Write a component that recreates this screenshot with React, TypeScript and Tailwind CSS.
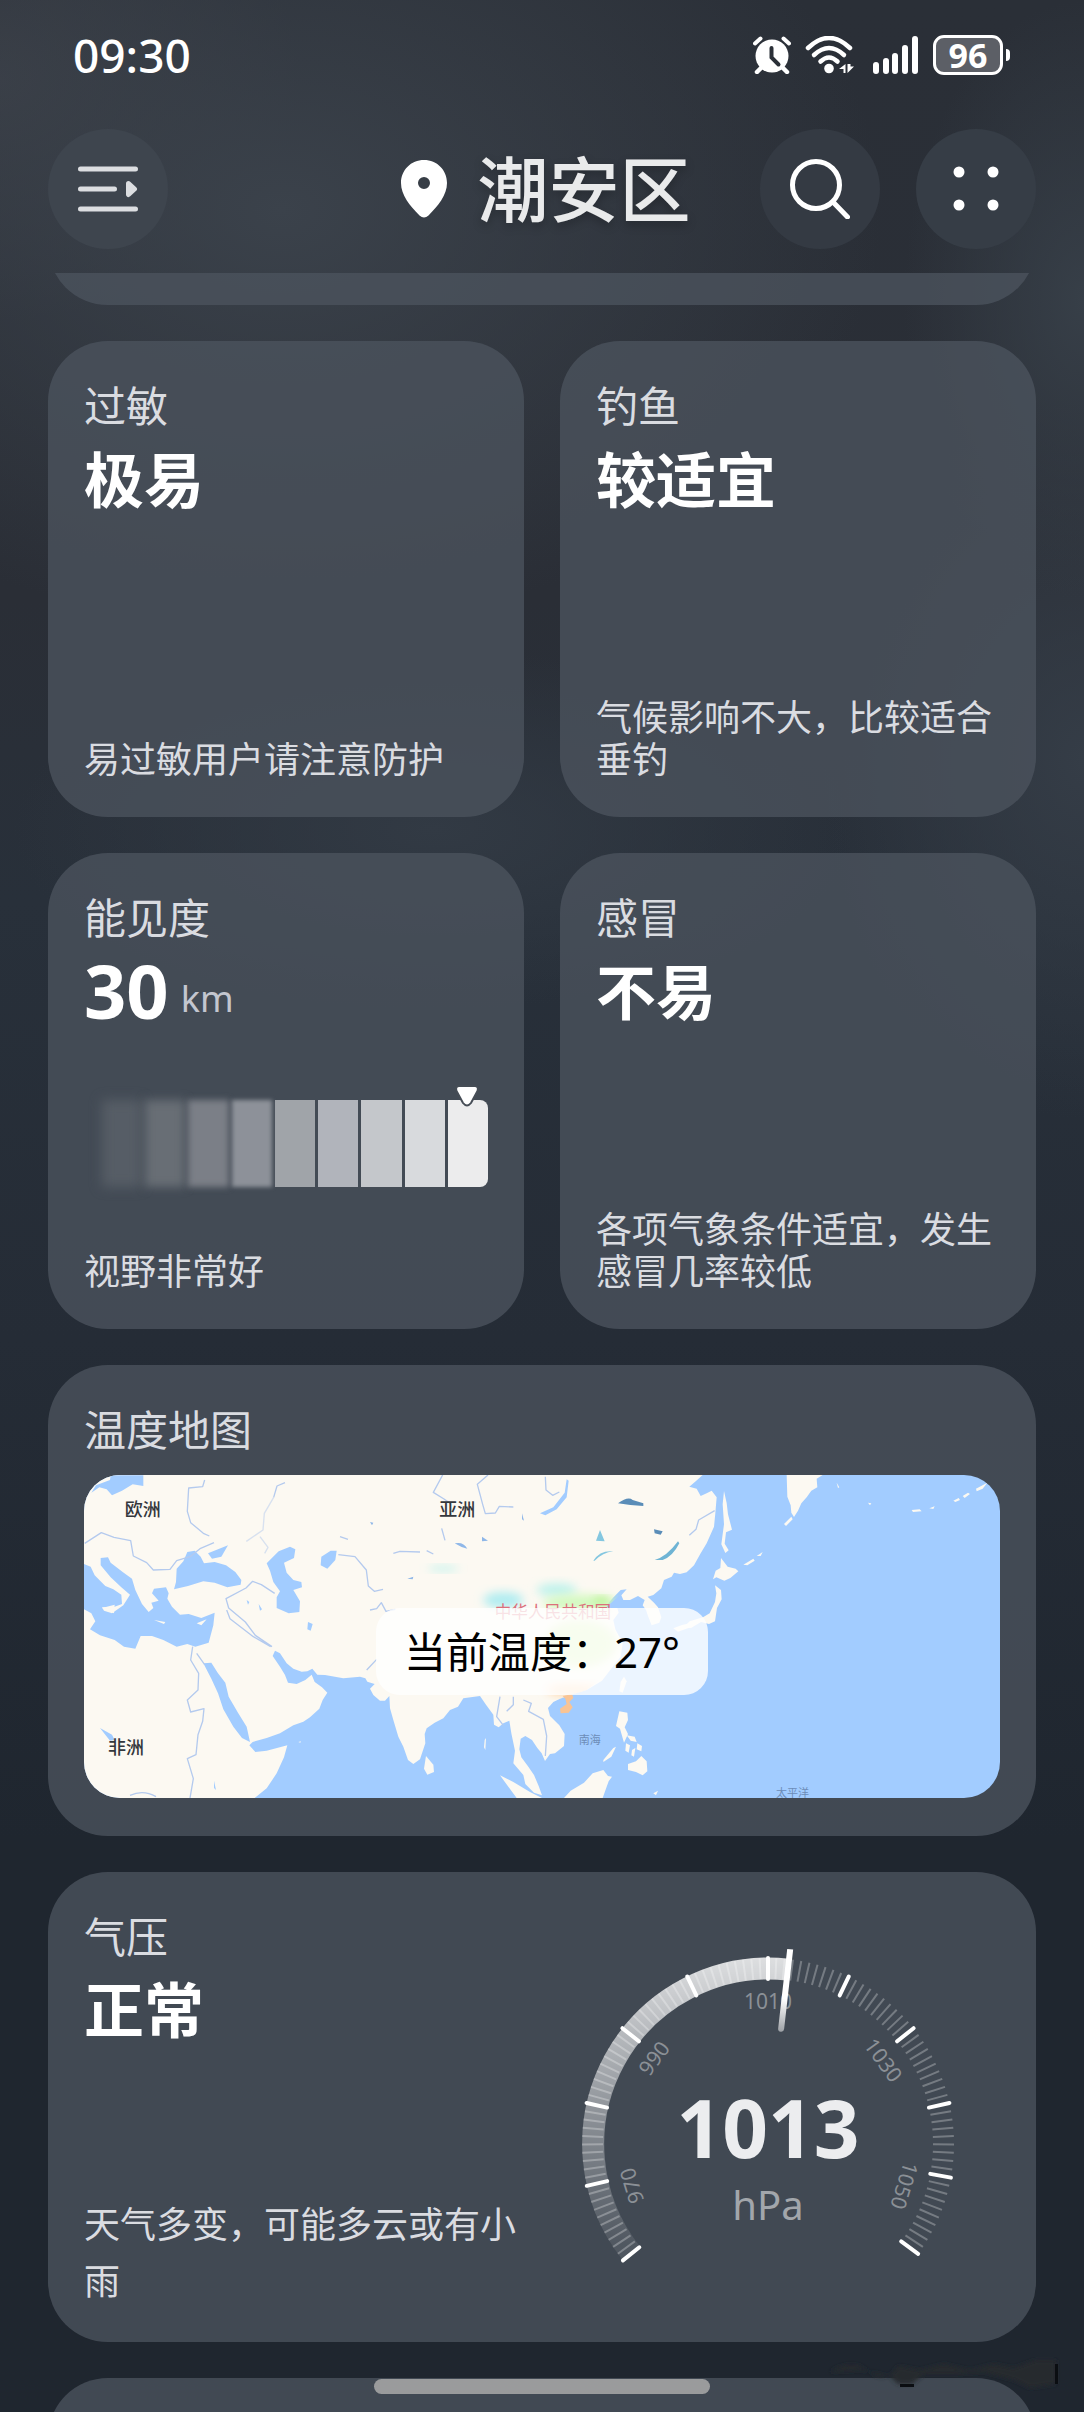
import React from 'react';

interface IndexCardProps {
  title: string;
  value: React.ReactNode;
  description: string;
  children?: React.ReactNode;
}

const VISIBILITY_LEVELS = [
  'bg-[#565d66] blur-[6px]',
  'bg-[#686e75] blur-[5px]',
  'bg-[#7b7f87] blur-[3px]',
  'bg-[#8d9199] blur-[2px]',
  'bg-[#a0a4a9]',
  'bg-[#b1b4bb]',
  'bg-[#c4c7cb]',
  'bg-[#d8dadd]',
  'bg-[#ececed] rounded-r-lg',
];

const TICK_STEP = 2.575;
const LEFT_TICKS = Array.from({ length: 51 }, (_, i) => i - 50);
const RIGHT_TICKS = Array.from({ length: 49 }, (_, i) => i + 1);
const MAJOR_TICKS = [-50, -40, -30, -20, -10, 0, 10, 20, 30, 39, 49];

const GAUGE_LABELS = [
  { text: '970', angle: -107 },
  { text: '990', angle: -53 },
  { text: '1010', angle: 0 },
  { text: '1030', angle: 54 },
  { text: '1050', angle: 107 },
];

const StatusBar = () => (
  <div className="flex h-[110px] items-center justify-between pr-[74px] pl-[73px] text-white">
    <span className="text-[46px] leading-[56px] font-medium">09:30</span>
    <div className="flex items-center gap-[14px]">
      {/* alarm */}
      <svg className="h-[38px] w-[38px]" viewBox="0 0 38 38" fill="none" stroke="currentColor" strokeLinecap="round">
        <circle cx="19" cy="20" r="16.500" fill="currentColor" stroke="none" />
        <path d="M2 7.500L7.500 2.500M36 7.500L30.500 2.500" strokeWidth="4" />
        <path d="M8 32l-4 4M30 32l4 4" strokeWidth="4.500" />
        <path d="M18.500 12v9.500l7 7" stroke="#2b3038" strokeWidth="4" />
      </svg>
      {/* wifi */}
      <svg className="h-[38px] w-[50px]" viewBox="0 0 50 38" fill="none" stroke="currentColor" strokeLinecap="round">
        <path d="M3 12Q24 -8 45 12" strokeWidth="4.500" />
        <path d="M9 19Q24 5 39 19" strokeWidth="4.500" />
        <path d="M15.500 25.500Q24 17.500 32.500 25.500" strokeWidth="4.500" />
        <circle cx="24" cy="32.500" r="4.800" fill="currentColor" stroke="none" />
        <path d="M40.500 28v9h-2v-4h-4.500zM42.500 28v9l6.500-6.500h-3.500V28z" fill="currentColor" stroke="none" />
      </svg>
      {/* signal */}
      <svg className="h-[38px] w-[50px]" viewBox="0 0 50 38" fill="currentColor">
        <rect x="4" y="26" width="6" height="12" rx="3" />
        <rect x="14" y="22" width="6" height="16" rx="3" />
        <rect x="23" y="17" width="6" height="21" rx="3" />
        <rect x="33" y="9" width="6" height="29" rx="3" />
        <rect x="43" y="0" width="6" height="38" rx="3" />
      </svg>
      <div className="flex items-center gap-[3px]">
        <div className="flex h-10 w-[70px] items-center justify-center rounded-[11px] border-3 border-white bg-[#5c5f66] text-[34px] leading-[34px] font-bold">
          96
        </div>
        <div className="h-3 w-1 rounded-r-sm bg-white" />
      </div>
    </div>
  </div>
);

const Header = () => (
  <header className="grid grid-cols-[1fr_auto_1fr] items-center px-12 pt-[19px] pb-6">
    <button
      aria-label="城市列表"
      className="flex h-[120px] w-[120px] items-center justify-center rounded-full bg-[#3e454e] text-[#dcdee1]"
    >
      <svg className="h-[60px] w-[60px]" viewBox="0 0 60 60" fill="none" stroke="currentColor" strokeWidth="5" strokeLinecap="round">
        <path d="M2.500 10h55M2.500 30h34M2.500 50h55" />
        <path d="M50.500 24.500l6 5.500-6 5.500z" fill="currentColor" strokeWidth="5" strokeLinejoin="round" />
      </svg>
    </button>
    <div className="flex items-center gap-[30px] pl-2">
      <svg className="h-[58px] w-[46px]" viewBox="0 0 46 58" fill="white" fillRule="evenodd">
        <path d="M23 0C10 0 0 10 0 23c0 12 9 23 18.500 32.500q4.500 4 9 0C37 46 46 35 46 23 46 10 36 0 23 0zm0 17a6 6 0 1 1 0 12 6 6 0 0 1 0-12z" />
      </svg>
      <h1 className="text-[71px] leading-[84px] font-medium text-[#e9eaeb] text-shadow-[0_4px_10px_rgb(0_0_0/0.25)]">
        潮安区
      </h1>
    </div>
    <div className="flex justify-end gap-9">
      <button
        aria-label="搜索"
        className="flex h-[120px] w-[120px] items-center justify-center rounded-full bg-[#343a43] text-white"
      >
        <svg className="h-[60px] w-[60px]" viewBox="0 0 60 60" fill="none" stroke="currentColor" strokeWidth="5" strokeLinecap="round">
          <circle cx="26" cy="26" r="23.500" />
          <path d="M43 43l14.500 15" />
        </svg>
      </button>
      <button
        aria-label="更多"
        className="flex h-[120px] w-[120px] items-center justify-center rounded-full bg-[#363d46] text-white"
      >
        <svg className="h-[46px] w-[46px]" viewBox="0 0 46 46" fill="currentColor">
          <circle cx="6" cy="6" r="5.500" />
          <circle cx="40" cy="6" r="5.500" />
          <circle cx="6" cy="39" r="5.500" />
          <circle cx="40" cy="39" r="5.500" />
        </svg>
      </button>
    </div>
  </header>
);

const CardTitle = ({ children }: { children: React.ReactNode }) => (
  <h2 className="text-[42px] leading-[58px] text-[#dadce1]">{children}</h2>
);

const IndexCard: React.FC<IndexCardProps> = ({ title, value, description, children }) => (
  <section className="flex min-h-[476px] flex-col rounded-[60px] bg-[#4c535d]/78 p-9">
    <CardTitle>{title}</CardTitle>
    <div className="mt-2 text-[60px] leading-[74px] font-bold text-white">{value}</div>
    {children}
    <p className="mt-auto text-[36px] leading-[42px] text-[#dadce1]">{description}</p>
  </section>
);

const VisibilityBar = () => (
  <div className="relative mt-[65px] flex h-[87px] gap-[3px] pl-[18px]">
    {VISIBILITY_LEVELS.map((level) => (
      <div key={level} className={`flex-1 ${level}`} />
    ))}
    <svg className="absolute -top-[15px] right-2 h-6 w-[26px]" viewBox="0 0 26 24">
      <path
        d="M5 1h16q4 .5 2.500 5L17 18q-4 5-8 0L2.500 6Q1 1.500 5 1z"
        fill="white"
        stroke="#464d56"
        strokeWidth="2"
      />
    </svg>
  </div>
);

const TemperatureMap = () => (
  <div className="relative mt-4 flex h-[323px] items-center justify-center overflow-hidden rounded-[36px] bg-[#a2ccff] pt-[30px]">
    <svg
      className="absolute inset-0 h-full w-full"
      viewBox="12 285 2748 969"
      preserveAspectRatio="xMidYMid slice"
    >
      <defs>
        <filter id="haze" x="-50%" y="-50%" width="200%" height="200%">
          <feGaussianBlur stdDeviation="14" />
        </filter>
        <clipPath id="mainland">
          <path d="M1000 285H1865L1900 440 1820 575 1720 645 1640 628 1580 680 1610 700 1600 740 1630 800 1600 850 1560 900 1520 930 1430 960 1000 960z" />
        </clipPath>
      </defs>
      {/* continents */}
      <g fill="#fcf9f2">
        <path d="M12 285H1868L1848 303 1828 320 1850 326 1862 348 1880 340 1895 332 1910 352 1906 400 1902 440 1880 490 1862 520 1842 556 1820 577 1800 582 1782 578 1775 590 1752 600 1744 625 1720 645 1703 650 1722 668 1734 682 1744 712 1738 728 1715 736 1704 708 1698 690 1688 676 1694 660 1674 648 1650 660 1630 660 1624 646 1640 628 1622 630 1602 650 1586 668 1578 684 1612 684 1616 698 1600 720 1606 748 1628 790 1622 830 1600 858 1566 902 1520 930 1470 945 1440 956 1420 966 1404 984 1410 1008 1438 1036 1454 1062 1452 1098 1425 1120 1410 1122 1395 1143 1385 1120 1372 1104 1356 1080 1336 1068 1322 1076 1318 1108 1324 1132 1345 1160 1362 1185 1376 1218 1386 1246 1362 1238 1336 1212 1330 1185 1300 1150 1305 1112 1294 1060 1288 1022 1270 1030 1256 1042 1242 1034 1240 1004 1218 974 1200 948 1150 955 1134 980 1110 990 1090 1015 1064 1028 1040 1045 1034 1062 1036 1090 1020 1138 1000 1152 984 1140 970 1100 955 1070 940 1020 930 985 928 948 915 962 900 962 880 945 870 926 884 912 862 905 856 895 840 890 790 895 735 885 712 884 697 866 682 874 665 875 640 866 620 850 600 820 585 812 578 828 600 860 615 885 624 908 650 912 676 900 695 884 704 906 726 922 742 938 728 960 718 986 690 1012 670 1025 640 1036 600 1060 560 1074 518 1086 508 1096 526 1116 560 1112 622 1096 612 1132 590 1180 560 1225 524 1254H12z" />
        {/* kamchatka and kurils */}
        <path d="M2120 285H2228L2210 296 2212 322 2194 332 2180 352 2164 370 2154 392 2142 411 2134 398 2132 376 2122 350z" />
        <path d="M2112 432l22-22 4 8-20 20zM1990 554l30-18 4 6-22 14zM2030 528l18-12-6 12zM2270 308l8 14-4 2zM2364 368l10 2-4 6zM2495 390l24-2 6 6-26 2zM2548 385l16-6-4 8zM2620 362l16-8 4 6-14 6zM2648 348l16-10 6 4-16 12zM2688 326l34-18-14 18-18 8z" />
        {/* sakhalin and japan */}
        <path d="M1932 333l8 36 4 34 12 46-18 8-4 34 12 20-10 8-12-26 8-60-4-60z" />
        <path d="M1923 534l20 26 24 6 8 8-24 20-18 8-24-10-10 6 8-26 14-8z" />
        <path d="M1905 616l18 14 2 28-14 26-6 40-18 8-24-6-30 18-20-4 16-16 40-12 20-12 16-34 4-26z" />
        <path d="M1780 745l26-10 38-8-10 14-40 14z" />
        {/* taiwan, philippines, borneo, sumatra, sri lanka */}
        <path d="M1632 890l8 14-12 34-10-4 4-28z" />
        <path d="M1618 994l24 4 2 22-10 22 10 20-12 26-12-42-12-8z" />
        <path d="M1640 1066l24 4 6 16-18-4zM1672 1090l14 8-2 16-14-6zM1638 1090l12 6-4 22-10-6zM1656 1110l10-6-4 26-8-4zM1644 1152l24-8 16-16 16 16 2 30-14 12-20-10-24-6zM1570 1140l30-36 8-4-14 30-24 16z" />
        <path d="M1570 1170l14 18 12 2-10 14-6 16-12 34H1452l20-22 40-24 26-28z" />
        <path d="M1260 1186l40 20 50 30 36 18H1310z" />
        <path d="M1038 1128l22 26 2 22-20 8-10-18z" />
        <path d="M1720 1240l14-8-6 14zM655 1086l8-2-2 4zM1214 1080l4-6-2 36-4-8z" />
      </g>
      {/* seas and lakes */}
      <g fill="#a2ccff">
        <path d="M34 338L48 316 90 300 92 286H190V318L158 313 126 332 96 346 80 328 58 322z" />
        <path d="M12 552L32 560 44 586 76 618 100 628 124 644 126 672 104 680 66 682 72 692 96 700 130 676 150 644 124 622 92 592 62 556 62 534 84 532 92 548 128 576 156 596 166 630 186 672 206 696 220 684 214 668 236 662 216 640 222 626 258 622 266 640 262 656 276 680 300 704 326 702 364 714 404 698 400 736 386 788 346 800 322 792 290 800 250 780 216 768 182 768 166 806 132 800 104 780 60 766 30 748 46 724 34 700 12 688z" />
        <path d="M288 606L290 566 310 544 322 516 344 512 362 530 372 550 404 546 438 556 466 576 484 600 482 614 442 622 404 608 370 604 324 618 282 628z" />
        <path d="M384 520L444 496 424 530 396 536z" />
        <path d="M560 550L596 514 630 500 646 508 642 534 612 548 620 578 640 600 664 606 666 622 640 630 660 664 658 696 626 700 590 684 590 652 600 634 580 606 570 572z" />
        <path d="M724 530L752 512 770 512 766 540 742 566 722 556z" />
        <path d="M370 850L394 848 414 880 436 908 446 950 474 998 500 1040 510 1086 486 1074 460 1040 430 988 414 940 394 896z" />
        <path d="M684 726l14 6-6 20-10-4zM500 660l8 6-4 8zM536 672l10 16-6 4zM60 1044l36 20 8 16-14 2zM402 1202l6 28-6-6z" />
        <path d="M1380 400l40-18 34-44 6-40 6 4-6 50-30 36-34 18z" />
      </g>
      <path d="M66 684l38-10-2 26zM222 720l34 6-4 6zM350 730l30-12-16 18z" fill="#fcf9f2" />
      {/* rivers */}
      <g fill="none" stroke="#b4caee" strokeWidth="4" strokeLinejoin="round">
        <path d="M14 490l50-32 38 14 50 10 8 46 40 20 20 22 50-2 20-26 40-12 30-24 42-18" />
        <path d="M374 300l-6 20-42 4-4 70 10 34 38 32 18 8M615 308l-24 10-10 34" />
        <path d="M581 352l-28 48-4 50-50 34M540 470l24 32-10 18" strokeOpacity="0.5" />
        <path d="M775 524l50 6 34 40 6 48 18 16 26-6" />
        <path d="M584 640l-40-26-26-10-20 20-60 32 8 28 50 42 30 40 50 34M440 690l10 26 70 54 52 30" />
        <path d="M338 800l-6 40 24 40-2 50-32 30 10 36 40-10-4 38-14 40-6 60-26 12 18 60-10 58M350 820l24 34M150 1246q40-18 78 4" />
        <path d="M870 690l20-4 14-18 14 26 28-6M940 520l20-6 60 2M1040 512l20 10M860 870l30-32M780 470l24 8" />
        <path d="M1088 285l-28 52 32 20 20 14M1224 285l-32 28 16 60 8 28 30-2 12-20 42 2M1396 290l2 40 20 16 20-10" />
        <path d="M1828 466l20-18 8-28 48-28M1085 445l10 36M1260 950l-10 60 20 26M1330 960l24 10-8 24 44 24 10 50-4 60M1300 950v24l-20 20" />
      </g>
      <g fill="#8fb7e8">
        <path d="M1124 490q26-6 38 16-20-4-38-16zM1206 470l18 12-18 2zM982 596l18-6-2 8zM1326 400l6 22-6-4zM870 426l10 2-4 8z" />
      </g>
      <g fill="#5a8db8">
        <path d="M1614 370q30-22 44-10l32 10v8q-40-2-76-8zM1722 448l26 6-6 10-18-4z" />
        <path d="M1724 540q36-10 70-56l4 6q-20 40-50 50z" fill="#6fb4d4" />
        <path d="M1560 450l14 34-26-2zM1540 542q20-32 60-28-32 4-56 28z" fill="#84c7e0" />
      </g>
      {/* temperature colouring */}
      <g clipPath="url(#mainland)">
        <ellipse cx="1090" cy="566" rx="46" ry="8" fill="#a5efe9" fillOpacity="0.7" filter="url(#haze)" />
        <ellipse cx="1270" cy="660" rx="60" ry="24" fill="#9deaf0" fillOpacity="0.8" filter="url(#haze)" />
        <ellipse cx="1430" cy="630" rx="60" ry="20" fill="#a5efe9" fillOpacity="0.7" filter="url(#haze)" />
        <ellipse cx="1500" cy="668" rx="110" ry="24" fill="#d3f9c0" filter="url(#haze)" />
        <ellipse cx="1565" cy="662" rx="26" ry="10" fill="#b5f28a" filter="url(#haze)" />
        <ellipse cx="1500" cy="790" rx="110" ry="70" fill="#d9f5b0" filter="url(#haze)" />
        <ellipse cx="1480" cy="930" rx="80" ry="16" fill="#ffcf9d" filter="url(#haze)" />
      </g>
      <path d="M1448 948l28-6 4 12-12 12 10 16-12 16-24 2-2-14 20-14-4-16z" fill="#f9c495" />
      <g fontFamily="'Noto Sans CJK SC', sans-serif" fontSize="54" fontWeight="500" fill="#34373c">
        <text x="134" y="408">欧洲</text>
        <text x="1078" y="408">亚洲</text>
        <text x="84" y="1122">非洲</text>
      </g>
      <text x="1244" y="714" fontFamily="'Noto Sans CJK SC', sans-serif" fontSize="50" fill="#dc6f7b">
        中华人民共和国
      </text>
      <g fontFamily="'Noto Sans CJK SC', sans-serif" fontSize="33" fill="#6d8cb8">
        <text x="1496" y="1091">南海</text>
        <text x="2088" y="1250">太平洋</text>
      </g>
    </svg>
    <p className="relative rounded-[24px] bg-white/80 px-7 py-[14px] text-[42px] leading-[59px] text-black">
      当前温度：27°
    </p>
  </div>
);

const PressureGauge = () => (
  <svg className="h-[372px] w-[400px] shrink-0" viewBox="0 0 400 372">
    <defs>
      <linearGradient id="arc" x1="0" y1="310" x2="0" y2="24" gradientUnits="userSpaceOnUse">
        <stop offset="0" stopColor="#fff" stopOpacity="0.08" />
        <stop offset="0.4" stopColor="#fff" stopOpacity="0.36" />
        <stop offset="1" stopColor="#fff" stopOpacity="0.82" />
      </linearGradient>
      <linearGradient id="needle" x1="0" y1="14" x2="0" y2="97" gradientUnits="userSpaceOnUse">
        <stop offset="0.6" stopColor="#fff" />
        <stop offset="1" stopColor="#9da1a6" />
      </linearGradient>
    </defs>
    <path d="M63.500 319.500A175.500 175.500 0 0 1 219.900 35.600" fill="none" stroke="url(#arc)" strokeWidth="22" />
    <g stroke="#fff" strokeOpacity="0.28" strokeWidth="2">
      {[...LEFT_TICKS, ...RIGHT_TICKS].map((n) => (
        <line key={n} x1="200" y1="24" x2="200" y2="45" transform={`rotate(${n * TICK_STEP} 200 210)`} />
      ))}
    </g>
    <g stroke="#fff" strokeWidth="4" strokeLinecap="round">
      {MAJOR_TICKS.map((n) => (
        <line key={n} x1="200" y1="24" x2="200" y2="45" transform={`rotate(${n * TICK_STEP} 200 210)`} />
      ))}
    </g>
    <g fontSize="21" fill="#8b9096" textAnchor="middle">
      {GAUGE_LABELS.map(({ text, angle }) => (
        <text key={text} x="200" y="75" transform={`rotate(${angle} 200 210)`}>
          {text}
        </text>
      ))}
    </g>
    <g transform="rotate(6.500 200 210)">
      <path d="M197 14h6v80a3 3 0 0 1-6 0z" fill="url(#needle)" />
    </g>
    <text x="200" y="224" fontSize="80" fontWeight="700" fill="#ecedef" textAnchor="middle">
      1013
    </text>
    <text x="200" y="286" fontSize="40" fill="#a2a6ab" textAnchor="middle">
      hPa
    </text>
  </svg>
);

export default function App() {
  return (
    <div className="relative min-h-screen overflow-hidden bg-[#20272f] bg-[radial-gradient(600px_420px_at_26%_210px,#3b424b_0%,transparent_100%),radial-gradient(180px_300px_at_100%_300px,#373f48_0%,transparent_100%),radial-gradient(420px_180px_at_40%_830px,#323a44_0%,transparent_100%),radial-gradient(260px_360px_at_100%_760px,#353d47_0%,transparent_100%),radial-gradient(300px_240px_at_0%_80px,#393d45_0%,transparent_100%),linear-gradient(#2a2f37_0px,#2a2e36_600px,#28303a_900px,#252c36_1340px,#1f262f_1840px)] bg-no-repeat font-['Noto_Sans','Noto_Sans_CJK_SC',sans-serif]">
      <StatusBar />
      <Header />

      <main className="flex flex-col gap-9 px-12">
        {/* tail of the card scrolled under the header */}
        <div className="flex h-8 flex-col justify-end overflow-hidden">
          <div className="h-32 shrink-0 rounded-[60px] bg-[#4c535d]/78" />
        </div>

        <div className="grid grid-cols-2 gap-9">
          <IndexCard title="过敏" value="极易" description="易过敏用户请注意防护" />
          <IndexCard title="钓鱼" value="较适宜" description="气候影响不大，比较适合垂钓" />
          <IndexCard
            title="能见度"
            value={
              <div className="flex items-center gap-3">
                <span className="pb-2 text-[74px] leading-[72px]">30</span>
                <span className="pt-2 text-[36px] leading-[72px] font-normal text-[#c3c6cf]">km</span>
              </div>
            }
            description="视野非常好"
          >
            <VisibilityBar />
          </IndexCard>
          <IndexCard title="感冒" value="不易" description="各项气象条件适宜，发生感冒几率较低" />
        </div>

        <section className="min-h-[471px] rounded-[60px] bg-[#4c535d]/78 p-9">
          <CardTitle>温度地图</CardTitle>
          <TemperatureMap />
        </section>

        <section className="flex min-h-[470px] gap-6 rounded-[60px] bg-[#4c535d]/78 pr-[68px] pl-9">
          <div className="flex flex-1 flex-col pt-9 pb-8">
            <CardTitle>气压</CardTitle>
            <div className="mt-2 text-[60px] leading-[72px] font-bold text-white">正常</div>
            <p className="mt-auto text-[36px] leading-[57px] text-[#dadce1]">天气多变，可能多云或有小雨</p>
          </div>
          <div className="flex items-end pb-9">
            <PressureGauge />
          </div>
        </section>

        {/* top of the next card */}
        <div className="h-[34px] overflow-hidden">
          <div className="h-32 rounded-[60px] bg-[#4c535d]/78" />
        </div>
      </main>

      <div className="absolute bottom-[18px] left-1/2 h-[15px] w-[336px] -translate-x-1/2 rounded-full bg-[#9a9b9c]" />
      <svg className="absolute right-5 bottom-5 h-10 w-[240px]" viewBox="0 0 240 40" aria-hidden="true">
        <defs>
          <filter id="smudge">
            <feGaussianBlur stdDeviation="2" />
          </filter>
        </defs>
        <path
          d="M6 20Q20 10 36 14L52 24Q66 28 74 14L96 18 120 12 146 18 170 12 190 16 212 8 232 8V32L206 36 190 28 160 20 130 22 100 22 88 32H74L66 24 36 18z"
          fill="#262a2e"
          filter="url(#smudge)"
        />
        <path d="M231 12h3v20h-3zM76 32h14v3H76z" fill="#0b0e12" />
      </svg>
    </div>
  );
}
